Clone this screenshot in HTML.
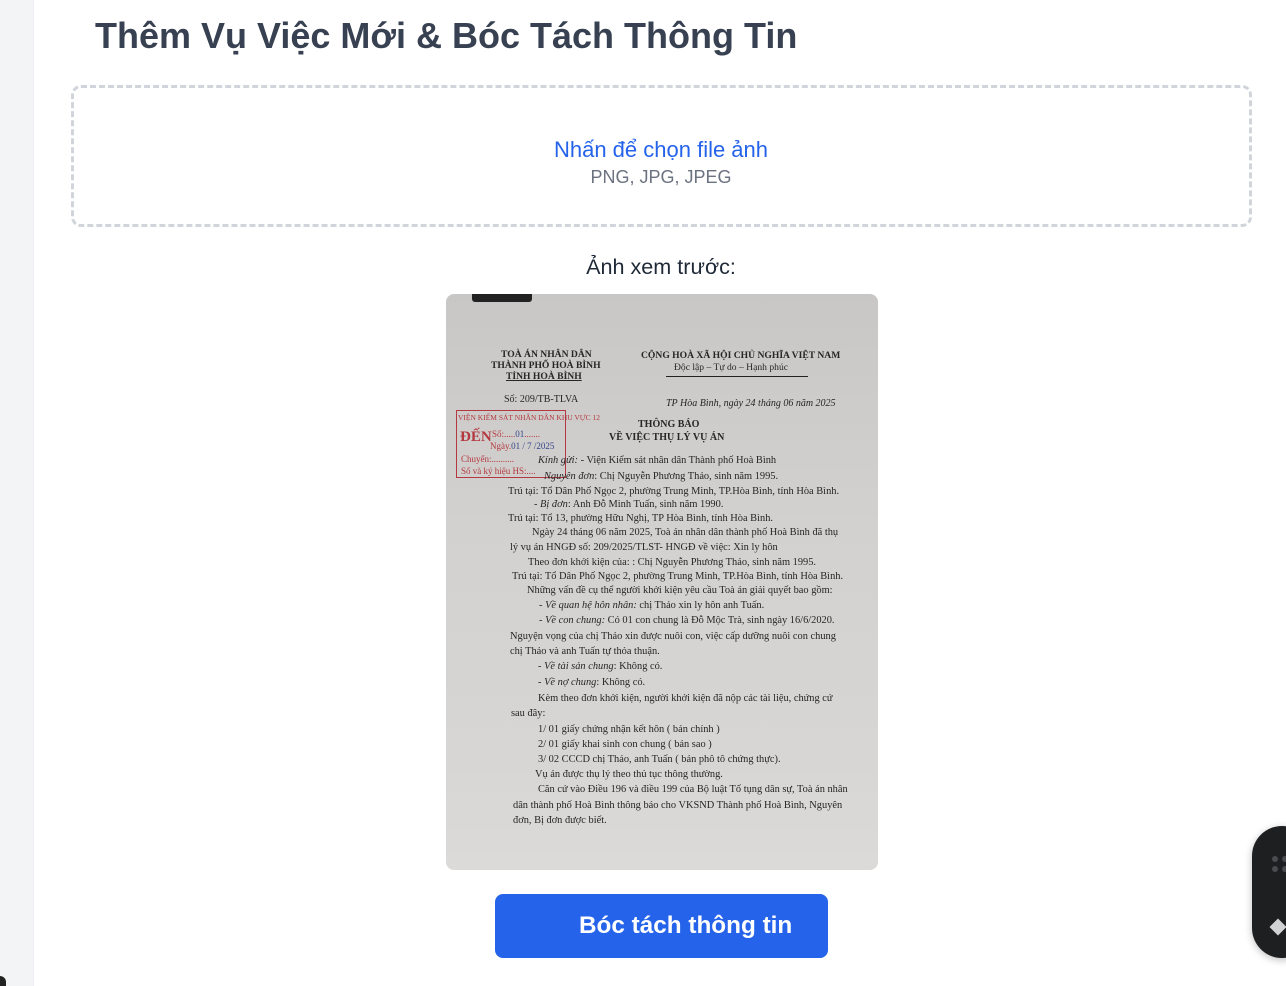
<!DOCTYPE html>
<html><head><meta charset="utf-8"><style>
*{margin:0;padding:0;box-sizing:border-box}
body{width:1286px;height:986px;overflow:hidden;background:#fff;font-family:"Liberation Sans",sans-serif;position:relative}
.side{position:absolute;left:0;top:0;width:34px;height:986px;background:#f3f4f6;border-right:1px solid #eceef1}
h1{position:absolute;left:95px;top:15px;font-size:36px;font-weight:700;color:#374151;letter-spacing:0}
.drop{position:absolute;left:71px;top:85px;width:1181px;height:142px;border:3px dashed #d1d5db;border-radius:10px}
.t1{position:absolute;left:0;width:1286px;text-align:center}
.doc{position:absolute;left:446px;top:294px;width:432px;height:576px;border-radius:8px;overflow:hidden;background:linear-gradient(180deg,#c9c7c6 0%,#d3d1cf 40%,#d8d6d4 80%,#dcdad8 100%)}
.doc div{position:absolute;font-family:"Liberation Serif",serif;font-size:10.4px;color:#262626;white-space:nowrap;line-height:11px}
.doc .h{font-size:9.6px}
.b{font-weight:700}
.i{font-style:italic}
.btn{position:absolute;left:495px;top:894px;width:333px;height:64px;background:#2563eb;border-radius:8px;color:#fff;font-weight:700;font-size:24.3px;line-height:64px;padding-left:84px}
.panel{position:absolute;left:1252px;top:826px;width:60px;height:132px;background:#1e1f21;border-radius:30px;box-shadow:0 2px 8px rgba(0,0,0,.25)}
</style></head><body>
<div class="side"></div>
<div style="position:absolute;left:0;top:976px;width:6px;height:10px;background:#222;border-radius:0 6px 0 0"></div>
<h1>Thêm Vụ Việc Mới &amp; Bóc Tách Thông Tin</h1>
<div class="drop"></div>
<div class="t1" style="top:137px;font-size:22px;color:#2563eb;left:18px">Nhấn để chọn file ảnh</div>
<div class="t1" style="top:167px;font-size:18px;color:#6b7280;left:18px">PNG, JPG, JPEG</div>
<div class="t1" style="top:254px;font-size:21.6px;color:#1f2937;left:18px">Ảnh xem trước:</div>
<div class="doc">
<div style="left:26px;top:-4px;width:60px;height:12px;background:#222;border-radius:3px"></div>
<div class="b h" style="left:55px;top:55px">TOÀ ÁN NHÂN DÂN</div>
<div class="b h" style="left:45px;top:66px">THÀNH PHỐ HOÀ BÌNH</div>
<div class="b h" style="left:60px;top:77px;text-decoration:underline">TỈNH HOÀ BÌNH</div>
<div class="b h" style="left:195px;top:56px">CỘNG HOÀ XÃ HỘI CHỦ NGHĨA VIỆT NAM</div>
<div class="h" style="left:228px;top:68px">Độc lập – Tự do – Hạnh phúc</div>
<div style="left:220px;top:82px;width:142px;height:1px;background:#222"></div>
<div class="h" style="left:58px;top:100px;font-size:10px">Số: 209/TB-TLVA</div>
<div class="i" style="left:220px;top:104px;font-size:10px">TP Hòa Bình, ngày 24 tháng 06  năm 2025</div>
<div style="left:10px;top:116px;width:110px;height:68px;border:1.5px solid #b3383f;color:#b3383f"></div>
<div style="left:12px;top:118px;color:#b3383f;font-size:7.5px">VIỆN KIỂM SÁT NHÂN DÂN KHU VỰC 12</div>
<div style="left:14px;top:138px;color:#b3383f;font-size:15px;font-weight:700">ĐẾN</div>
<div style="left:46px;top:135px;color:#b3383f;font-size:9px">Số:.....<span style="color:#34448a">01</span>.......</div>
<div style="left:44px;top:147px;color:#b3383f;font-size:9px">Ngày.<span style="color:#34448a">01 / 7 /2025</span></div>
<div style="left:15px;top:160px;color:#b3383f;font-size:9px">Chuyển:..........</div>
<div style="left:15px;top:172px;color:#b3383f;font-size:9px">Số và ký hiệu HS:....</div>
<div class="b" style="left:192px;top:125px;font-size:10px">THÔNG BÁO</div>
<div class="b" style="left:163px;top:138px;font-size:10px">VỀ VIỆC THỤ LÝ VỤ ÁN</div>
<div style="left:92px;top:161px"><span class="i">Kính gửi:</span>  -  Viện Kiểm sát nhân dân Thành phố Hoà Bình</div>
<div style="left:98px;top:177px"><span class="i">Nguyên đơn</span>: Chị Nguyễn Phương Thảo, sinh năm 1995.</div>
<div style="left:62px;top:192px">Trú tại: Tổ Dân Phố Ngọc 2, phường Trung Minh, TP.Hòa Bình, tỉnh Hòa Bình.</div>
<div style="left:88px;top:205px"><span class="i">- Bị đơn</span>: Anh Đỗ Minh Tuấn, sinh năm 1990.</div>
<div style="left:62px;top:219px">Trú tại: Tổ 13, phường Hữu Nghị, TP Hòa Bình, tỉnh Hòa Bình.</div>
<div style="left:86px;top:233px">Ngày 24 tháng 06 năm 2025, Toà án nhân dân thành phố Hoà Bình đã thụ</div>
<div style="left:64px;top:248px">lý vụ án HNGĐ số: 209/2025/TLST- HNGĐ về việc:  Xin ly hôn</div>
<div style="left:82px;top:263px">Theo đơn khởi kiện của: : Chị Nguyễn Phương Thảo, sinh năm 1995.</div>
<div style="left:66px;top:277px">Trú tại: Tổ Dân Phố Ngọc 2, phường Trung Minh, TP.Hòa Bình, tỉnh Hòa Bình.</div>
<div style="left:81px;top:291px">Những vấn đề cụ thể người khởi kiện yêu cầu Toà án giải quyết bao gồm:</div>
<div style="left:93px;top:306px">-  <span class="i">Về quan hệ hôn nhân:</span> chị Thảo xin ly hôn anh Tuấn.</div>
<div style="left:93px;top:321px">- <span class="i">Về con chung:</span> Có 01 con chung là Đỗ Mộc Trà, sinh ngày 16/6/2020.</div>
<div style="left:64px;top:337px">Nguyện vọng của chị Thảo xin được nuôi con, việc cấp dưỡng nuôi con chung</div>
<div style="left:64px;top:352px">chị Thảo và anh Tuấn tự thỏa thuận.</div>
<div style="left:92px;top:367px">- <span class="i">Về tài sản chung</span>: Không có.</div>
<div style="left:92px;top:383px">- <span class="i">Về nợ chung</span>: Không có.</div>
<div style="left:92px;top:399px">Kèm theo đơn khởi kiện, người khởi kiện đã nộp các tài liệu, chứng cứ</div>
<div style="left:65px;top:414px">sau đây:</div>
<div style="left:92px;top:430px">1/  01 giấy chứng nhận kết hôn ( bản chính )</div>
<div style="left:92px;top:445px">2/  01 giấy khai sinh con chung ( bản sao )</div>
<div style="left:92px;top:460px">3/  02 CCCD chị Thảo, anh Tuấn  ( bản phô tô chứng thực).</div>
<div style="left:89px;top:475px">Vụ án được thụ lý theo thủ tục thông thường.</div>
<div style="left:92px;top:490px">Căn cứ vào Điều 196 và điều 199 của Bộ luật Tố tụng dân sự, Toà án nhân</div>
<div style="left:67px;top:506px">dân thành phố Hoà Bình thông báo cho VKSND Thành phố Hoà Bình, Nguyên</div>
<div style="left:67px;top:521px">đơn, Bị đơn được biết.</div>
</div>
<div class="btn">Bóc tách thông tin</div>
<div class="panel">
<div style="position:absolute;left:20px;top:30px;width:6px;height:6px;border-radius:50%;background:#4a4b4e;box-shadow:10px 0 #4a4b4e,0 10px #4a4b4e,10px 10px #4a4b4e"></div>
<div style="position:absolute;left:20px;top:95px;width:12px;height:12px;background:#d0d2d4;transform:rotate(45deg)"></div>
</div>
</body></html>
